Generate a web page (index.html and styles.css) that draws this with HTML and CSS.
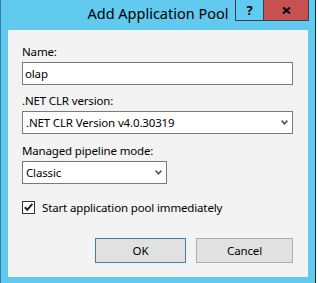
FILE: index.html
```html
<!DOCTYPE html>
<html>
<head>
<meta charset="utf-8">
<title>Add Application Pool</title>
<link rel="stylesheet" href="styles.css">
</head>
<body>
<div class="window">
  <div class="titlebar">
    <div class="title">Add Application Pool</div>
    <div class="caption_btns">
      <span class="cap_btn help">?</span>
      <span class="cap_btn close"><svg width="9" height="7" viewBox="0 0 9 7"><path d="M1 0.5L8 6.5M8 0.5L1 6.5" stroke="#000" stroke-width="2"/></svg></span>
    </div>
  </div>
  <div class="panel">
    <label class="lbl">Name:</label>
    <input class="textbox" type="text" value="olap">

    <label class="lbl gap">.NET CLR version:</label>
    <div class="combo wide">
      <span>.NET CLR Version v4.0.30319</span>
      <svg class="arrow" width="7" height="5" viewBox="0 0 7 5"><path d="M0.6 0.6L3.5 3.8L6.4 0.6" fill="none" stroke="#5a5a5a" stroke-width="1.7"/></svg>
    </div>

    <label class="lbl gap2">Managed pipeline mode:</label>
    <div class="combo short">
      <span>Classic</span>
      <svg class="arrow" width="7" height="5" viewBox="0 0 7 5"><path d="M0.6 0.6L3.5 3.8L6.4 0.6" fill="none" stroke="#5a5a5a" stroke-width="1.7"/></svg>
    </div>

    <div class="check_row">
      <span class="checkbox"><svg width="11" height="11" viewBox="0 0 11 11"><path d="M1.8 5.2L4.3 7.8L9.3 1.8" fill="none" stroke="#222" stroke-width="2"/></svg></span>
      <span>Start application pool immediately</span>
    </div>

    <div class="actions">
      <button class="btn default">OK</button>
      <button class="btn cancel">Cancel</button>
    </div>
  </div>
</div>
</body>
</html>
```
FILE: styles.css
```css
*{margin:0;padding:0;box-sizing:border-box;}
body{background:#fff;font-family:"Noto Sans","Open Sans",sans-serif;font-size:11.5px;letter-spacing:-0.15px;color:#000;}
.window{width:316px;height:283px;background:#62caef;border-left:1px solid #2c83a8;border-right:1px solid #1b2a33;display:flex;flex-direction:column;}

/* title bar */
.titlebar{height:30px;display:grid;}
.title{grid-area:1/1;justify-self:center;align-self:start;margin-top:3px;font-size:14.5px;line-height:20px;letter-spacing:0;}
.caption_btns{grid-area:1/1;justify-self:end;align-self:start;display:flex;margin-right:6px;}
.cap_btn{height:21px;display:flex;align-items:center;justify-content:center;border-left:1px solid #2f4350;border-bottom:1px solid #2f4350;}
.help{width:28px;font-weight:bold;font-size:13px;}
.close{width:46px;background:#c75050;border-right:1px solid #2f4350;}

/* dialog body */
.panel{flex:1;margin:0 7px 6px;background:#f3f3f3;padding:14px 15px 14px 14px;display:flex;flex-direction:column;}
.lbl{display:block;line-height:15px;margin-bottom:3px;}
.lbl.gap{margin-top:8px;}
.lbl.gap2{margin-top:9px;}
.textbox{height:23px;width:100%;border:1px solid #7a7a7a;background:#fff;padding:0 2px;font:inherit;letter-spacing:inherit;color:#000;outline:none;}
.combo{height:23px;border:1px solid #7a7a7a;background:#fff;display:flex;align-items:center;justify-content:space-between;padding:0 4px 0 3px;}
.combo.wide{width:100%;}
.combo.short{width:145px;}
.combo span{line-height:15px;}

.check_row{margin-top:16px;display:flex;align-items:center;gap:7px;line-height:15px;}
.checkbox{width:13px;height:13px;border:1px solid #333;background:#fff;display:flex;align-items:center;justify-content:center;}

.actions{margin-top:auto;display:flex;justify-content:flex-end;gap:10px;}
.btn{height:25px;background:#e1e1e1;border:1px solid #adadad;font:inherit;letter-spacing:inherit;color:#000;}
.btn.default{width:91px;border-color:#3c7fb1;}
.btn.cancel{width:97px;}
```
